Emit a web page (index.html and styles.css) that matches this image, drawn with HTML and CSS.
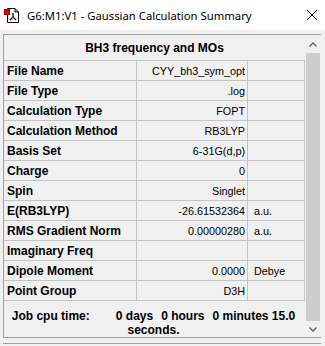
FILE: index.html
```html
<!DOCTYPE html>
<html>
<head>
<meta charset="utf-8">
<link rel="stylesheet" href="styles.css">
</head>
<body>
<div class="titlebar">
  <svg class="appicon" width="16" height="16" viewBox="0 0 16 16">
    <path d="M3.5 1.5 H11 L14.5 5 V15.5 H3.5 Z" fill="#fff" stroke="#000"/>
    <path d="M11 1.5 V5 H14.5" fill="none" stroke="#000"/>
    <path d="M9 6 V10 M9 10 L6 13 M9 10 L12 13" stroke="#000" stroke-width="1.2" fill="none"/>
    <rect x="8" y="9" width="2" height="2" fill="#d00"/>
    <rect x="0.5" y="2.5" width="5" height="5" fill="#e00000" stroke="#900"/>
  </svg>
  <span class="title">G6:M1:V1 - Gaussian Calculation Summary</span>
  <svg class="close" width="12" height="12" viewBox="0 0 12 12">
    <path d="M1 1 L11 11 M11 1 L1 11" stroke="#000" stroke-width="1"/>
  </svg>
</div>
<div class="main">
  <div class="panel">
    <div class="content">
      <div class="header">BH3 frequency and MOs</div>
      <div class="grid">
        <div class="row"><div class="lab">File Name</div><div class="val">CYY_bh3_sym_opt</div><div class="unit"></div></div>
        <div class="row"><div class="lab">File Type</div><div class="val">.log</div><div class="unit"></div></div>
        <div class="row"><div class="lab">Calculation Type</div><div class="val">FOPT</div><div class="unit"></div></div>
        <div class="row"><div class="lab">Calculation Method</div><div class="val">RB3LYP</div><div class="unit"></div></div>
        <div class="row"><div class="lab">Basis Set</div><div class="val">6-31G(d,p)</div><div class="unit"></div></div>
        <div class="row"><div class="lab">Charge</div><div class="val">0</div><div class="unit"></div></div>
        <div class="row"><div class="lab">Spin</div><div class="val">Singlet</div><div class="unit"></div></div>
        <div class="row"><div class="lab">E(RB3LYP)</div><div class="val">-26.61532364</div><div class="unit">a.u.</div></div>
        <div class="row"><div class="lab">RMS Gradient Norm</div><div class="val">0.00000280</div><div class="unit">a.u.</div></div>
        <div class="row"><div class="lab">Imaginary Freq</div><div class="val"></div><div class="unit"></div></div>
        <div class="row"><div class="lab">Dipole Moment</div><div class="val">0.0000</div><div class="unit">Debye</div></div>
        <div class="row"><div class="lab">Point Group</div><div class="val">D3H</div><div class="unit"></div></div>
      </div>
      <div class="cpu">
        <div class="cpuline"><span>Job cpu time:</span><span class="g1">0 days</span><span class="g2">0 hours</span><span class="g2">0 minutes 15.0</span></div>
        <div class="cpuline">seconds.</div>
      </div>
    </div>
    <div class="scroll">
      <svg class="arrow" width="16" height="16" viewBox="0 0 16 16"><path d="M4.5 9.5 L8 6 L11.5 9.5" stroke="#606060" stroke-width="1.4" fill="none"/></svg>
      <div class="thumb"></div>
      <svg class="arrow" width="16" height="16" viewBox="0 0 16 16"><path d="M4.5 6.5 L8 10 L11.5 6.5" stroke="#606060" stroke-width="1.4" fill="none"/></svg>
    </div>
  </div>
  <div class="below"></div>
</div>
</body>
</html>
```

FILE: styles.css
```css
* { box-sizing: border-box; }
html, body {
  margin: 0;
  padding: 0;
  background: #f0f0f0;
  width: 325px;
  height: 346px;
  overflow: hidden;
}
body {
  font-family: "Liberation Sans", Arial, sans-serif;
  font-size: 12px;
  color: #000;
}
.titlebar {
  height: 30px;
  background: #fff;
  display: flex;
  align-items: center;
  padding-left: 4px;
}
.appicon { flex: none; margin-right: 7px; }
.title {
  font-family: "Noto Sans", "Open Sans", sans-serif;
  font-size: 11.3px;
  flex: 1;
  color: #000;
}
.close { flex: none; margin-right: 7px; }
.main {
  padding: 4px 4px 0 3px;
}
.panel {
  border: 1px solid #a0a0a0;
  height: 304px;
  display: flex;
  background: #f0f0f0;
}
.content {
  width: 301px;
  flex: none;
  display: flex;
  flex-direction: column;
}
.header {
  height: 28px;
  border-bottom: 1px solid #c4c4c4;
  display: flex;
  align-items: center;
  justify-content: center;
  font-weight: bold;
  padding-top: 1px;
}
.row {
  display: grid;
  grid-template-columns: 133px 111px 57px;
  height: 20px;
  border-bottom: 1px solid #c4c4c4;
}
.lab, .val, .unit {
  display: flex;
  align-items: center;
  border-right: 1px solid #c4c4c4;
  white-space: nowrap;
  padding-top: 1px;
}
.lab { font-weight: bold; padding-left: 3px; }
.val { justify-content: flex-end; padding-right: 2px; font-size: 10.8px; }
.unit { padding-left: 6px; font-size: 10.8px; }
.cpu {
  flex: 1;
  font-weight: bold;
  text-align: center;
  padding-top: 8px;
  line-height: 14px;
  padding-right: 2px;
}
.cpuline { white-space: nowrap; }
.g1 { margin-left: 26px; }
.g2 { margin-left: 8px; }
.scroll {
  flex: none;
  width: 16px;
  display: flex;
  flex-direction: column;
  background: #f0f0f0;
  padding-top: 2px;
}
.arrow { flex: none; display: block; }
.thumb {
  flex: 1;
  background: #cdcdcd;
  margin: 0 1px;
}
.below {
  margin-top: 5px;
  border-top: 1px solid #a0a0a0;
  height: 4px;
}
```
